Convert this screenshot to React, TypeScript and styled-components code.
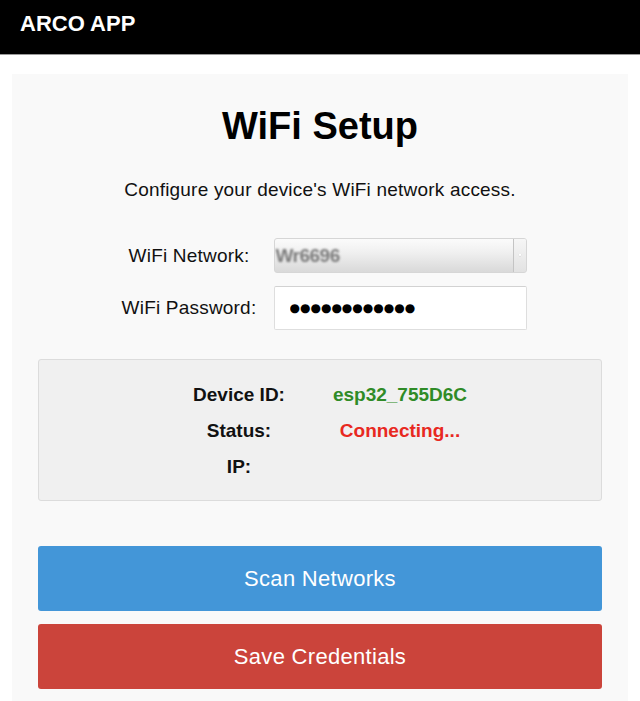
import React from "react";
import styled, { createGlobalStyle } from "styled-components";

const GlobalStyle = createGlobalStyle`
  html, body {
    margin: 0;
    padding: 0;
    background: #ffffff;
    font-family: "Liberation Sans", Arial, Helvetica, sans-serif;
    color: #111;
  }
  * { box-sizing: border-box; }
`;

const Header = styled.header`
  height: 55px;
  background: #000;
  border-bottom: 1px solid #9a9a9a;
  padding: 11px 20px 0;
`;

const Brand = styled.div`
  color: #fff;
  font-size: 22px;
  font-weight: 700;
  line-height: normal;
`;

const Card = styled.main`
  margin: 19px 12px 0;
  background: #f9f9f9;
  padding: 30px 26px 30px;
  min-height: 640px;
`;

const Title = styled.h1`
  margin: 0;
  text-align: center;
  font-size: 38px;
  line-height: 44px;
  font-weight: 700;
  color: #000;
`;

const Subtitle = styled.p`
  margin: 31px 0 0;
  text-align: center;
  font-size: 19px;
  line-height: 22px;
  letter-spacing: 0.2px;
  color: #111;
`;

const Form = styled.div`
  margin-top: 37px;
  display: grid;
  grid-template-columns: 151px 253px;
  column-gap: 9px;
  row-gap: 13px;
  justify-content: center;
  align-items: center;
`;

const Label = styled.label`
  text-align: center;
  font-size: 19px;
  line-height: 22px;
  letter-spacing: 0.2px;
  color: #111;
  white-space: nowrap;
`;

const SelectBox = styled.div`
  height: 35px;
  display: flex;
  align-items: stretch;
  border: 1px solid #d6d6d6;
  border-radius: 3px;
  background: linear-gradient(#fbfbfb, #f0f0f0 40%, #d9d9d9);
  overflow: hidden;
`;

const NetworkName = styled.span`
  flex: 1;
  display: flex;
  align-items: center;
  padding-left: 1px;
  font-size: 19px;
  font-weight: 700;
  letter-spacing: -0.5px;
  color: #7a7a7a;
  filter: blur(1.2px);
`;

const ArrowCell = styled.span`
  width: 13px;
  border-left: 1px solid #c4c4c4;
  background: linear-gradient(#f6f6f6, #e2e2e2);
  display: flex;
  align-items: center;
  justify-content: center;
  &::after {
    content: "";
    border-left: 2.5px solid transparent;
    border-right: 2.5px solid transparent;
    border-top: 3px solid #ffffff;
    filter: drop-shadow(0 0 0.5px #999);
  }
`;

const PasswordInput = styled.input`
  height: 44px;
  width: 100%;
  border: 1px solid #dedede;
  border-top-color: #d2d2d2;
  border-radius: 2px;
  background: #fff;
  padding: 0 0 0 15px;
  font-family: "DejaVu Sans", sans-serif;
  font-size: 12px;
  color: #000;
  outline: none;
`;

const InfoBox = styled.section`
  margin-top: 29px;
  height: 142px;
  background: #f0f0f0;
  border: 1px solid #dcdcdc;
  border-radius: 3px;
  padding-top: 17px;
  display: grid;
  grid-template-columns: 160px 162px;
  grid-auto-rows: 36px;
  justify-content: center;
  align-content: start;
`;

const InfoCell = styled.div<{ $color?: string }>`
  text-align: center;
  font-size: 19px;
  font-weight: 700;
  line-height: 36px;
  color: ${(p) => p.$color ?? "#111"};
  white-space: nowrap;
`;

const Button = styled.button<{ $bg: string; $top: number }>`
  display: block;
  width: 100%;
  height: 65px;
  margin-top: ${(p) => p.$top}px;
  border: none;
  border-radius: 3px;
  background: ${(p) => p.$bg};
  color: #fff;
  font-family: "Liberation Sans", Arial, sans-serif;
  font-size: 22px;
  letter-spacing: 0.3px;
  cursor: pointer;
`;

export default function App() {
  return (
    <>
      <GlobalStyle />
      <Header>
        <Brand>ARCO APP</Brand>
      </Header>
      <Card>
        <Title>WiFi Setup</Title>
        <Subtitle>Configure your device's WiFi network access.</Subtitle>
        <Form>
          <Label>WiFi Network:</Label>
          <SelectBox>
            <NetworkName>Wr6696</NetworkName>
            <ArrowCell />
          </SelectBox>
          <Label>WiFi Password:</Label>
          <PasswordInput type="text" readOnly value="●●●●●●●●●●●●" />
        </Form>
        <InfoBox>
          <InfoCell>Device ID:</InfoCell>
          <InfoCell $color="#2f8b27">esp32_755D6C</InfoCell>
          <InfoCell>Status:</InfoCell>
          <InfoCell $color="#e8291f">Connecting...</InfoCell>
          <InfoCell>IP:</InfoCell>
          <InfoCell></InfoCell>
        </InfoBox>
        <Button $bg="#4396d8" $top={45}>Scan Networks</Button>
        <Button $bg="#cb443b" $top={13}>Save Credentials</Button>
      </Card>
    </>
  );
}
